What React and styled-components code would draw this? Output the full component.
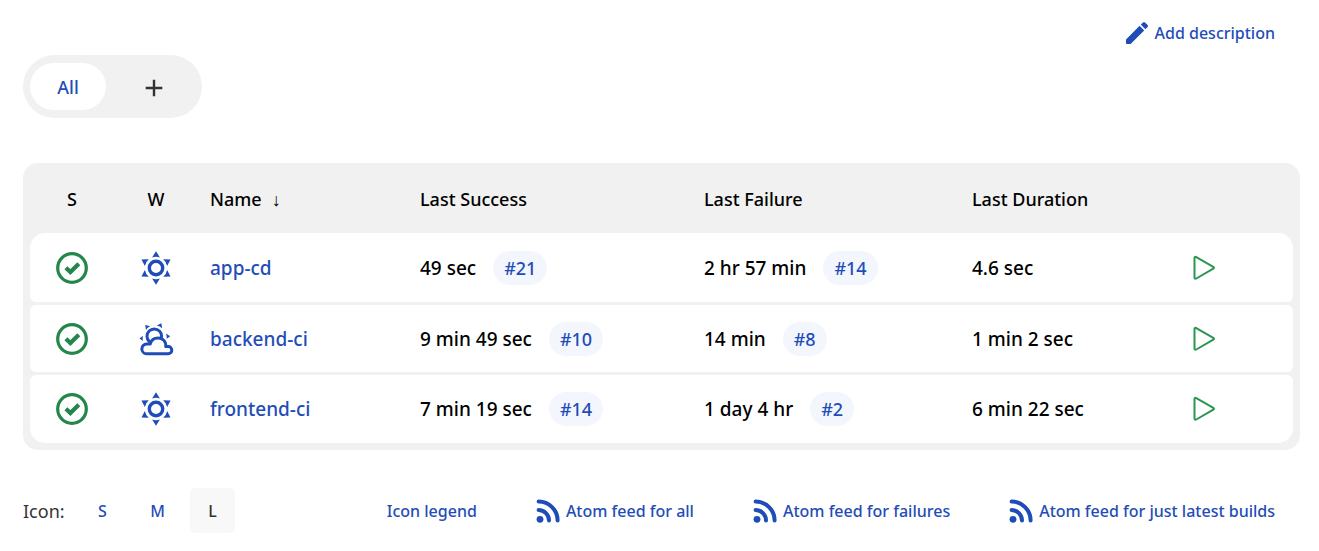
import React, { useState } from "react";
import styled, { createGlobalStyle } from "styled-components";

const blue = "#1f4db8";
const green = "#23864a";

const GlobalStyle = createGlobalStyle`
  *, *::before, *::after { box-sizing: border-box; }
  body {
    margin: 0;
    background: #fff;
    color: #000;
    font-family: "Segoe UI", "Noto Sans", "Open Sans", sans-serif;
    font-size: 18px;
    font-weight: 500;
  }
  button, input { font: inherit; }
`;

const Page = styled.main`
  padding: 10px 19px 16px 23px;
`;

const TopBar = styled.div`
  display: flex;
  justify-content: flex-end;
  height: 45px;
  padding-right: 25px;
`;

const TextLink = styled.a`
  display: inline-flex;
  align-items: center;
  gap: 6px;
  height: 45px;
  color: ${blue};
  font-size: 16px;
  text-decoration: none;
  white-space: nowrap;
`;

const Tabs = styled.nav`
  display: inline-flex;
  gap: 7px;
  padding: 8px 7px;
  border-radius: 32px;
  background: #f1f1f1;
`;

const Tab = styled.button`
  display: flex;
  align-items: center;
  justify-content: center;
  width: ${(p) => (p.$active ? 76 : 82)}px;
  height: 47px;
  padding: 0;
  border: 0;
  border-radius: 24px;
  background: ${(p) => (p.$active ? "#fff" : "transparent")};
  color: ${(p) => (p.$active ? blue : "#333")};
  cursor: pointer;
`;

const TablePanel = styled.section`
  margin-top: 45px;
  padding: 0 7px 4px;
  border-radius: 15px;
  background: #f1f1f1;
`;

const JobTable = styled.table`
  width: 100%;
  table-layout: fixed;
  border-collapse: separate;
  border-spacing: 0 3px;
`;

const HeadCell = styled.th`
  height: 64px;
  padding: 2px 12px 0;
  font-weight: 500;
  text-align: ${(p) => (p.$center ? "center" : "left")};
  white-space: nowrap;
`;

const SortArrow = styled.span`
  margin-left: 10px;
  font-family: "Liberation Sans", sans-serif;
  font-weight: 400;
`;

const Cell = styled.td`
  height: 67px;
  padding: 0 12px;
  background: #fff;
  font-size: 19px;
  text-align: ${(p) => (p.$center ? "center" : "left")};
  white-space: nowrap;
  svg { display: inline-block; vertical-align: middle; }
`;

const Row = styled.tr`
  & > td:first-child { border-radius: 6px 0 0 6px; }
  & > td:last-child { border-radius: 0 6px 6px 0; padding: 0; }
  &:first-child > td { height: 69px; }
  &:last-child > td { height: 68px; }
  &:first-child > td:first-child { border-top-left-radius: 15px; }
  &:first-child > td:last-child { border-top-right-radius: 15px; }
  &:last-child > td:first-child { border-bottom-left-radius: 15px; }
  &:last-child > td:last-child { border-bottom-right-radius: 15px; }
`;

const JobLink = styled.a`
  color: ${blue};
  text-decoration: none;
`;

const BuildLink = styled.a`
  display: inline-flex;
  align-items: center;
  height: 34px;
  margin-left: 17px;
  padding: 0 11px;
  border-radius: 17px;
  background: #f3f6fc;
  color: ${blue};
  font-size: 18px;
  text-decoration: none;
`;

const RunButton = styled.button`
  display: flex;
  align-items: center;
  justify-content: center;
  width: 56px;
  height: 45px;
  padding: 0;
  border: 0;
  background: transparent;
  cursor: pointer;
`;

const Footer = styled.footer`
  display: flex;
  align-items: center;
  justify-content: space-between;
  margin-top: 38px;
  padding-right: 25px;
`;

const Sizes = styled.div`
  display: flex;
  align-items: center;
  gap: 10px;
`;

const SizesLabel = styled.span`
  width: 47px;
  color: #333;
  font-weight: 400;
`;

const SizeButton = styled.button`
  width: 45px;
  height: 45px;
  padding: 0;
  border: 0;
  border-radius: 5px;
  background: ${(p) => (p.$active ? "#f8f8f8" : "transparent")};
  color: ${(p) => (p.$active ? "#333" : blue)};
  font-size: 16px;
  cursor: pointer;
`;

const FooterLinks = styled.div`
  display: flex;
  gap: 59px;
`;

const PencilIcon = () => (
  <svg width="24" height="24" viewBox="0 0 24 24" fill={blue} aria-hidden="true">
    <path d="M1 18.4 14.6 4.8l4.6 4.6L5.6 23H2q-1 0-1-1zM15.8 3.6 18 1.4q1-.9 2 0l2.6 2.6q.9 1 0 2l-2.2 2.2z" />
  </svg>
);

const PlusIcon = () => (
  <svg width="18" height="20" viewBox="0 0 18 20" stroke="#333" strokeWidth="2.4" aria-hidden="true">
    <path d="M9 2.700v16.600M.7 11h16.600" />
  </svg>
);

const SuccessIcon = () => (
  <svg width="32" height="32" viewBox="0 0 32 32" fill="none" stroke={green} role="img" aria-label="Success">
    <circle cx="16" cy="16" r="14.300" strokeWidth="3.200" />
    <path d="m9.900 15.700 4.500 4.300 8.400-8.200" strokeWidth="4.200" />
  </svg>
);

const SunnyIcon = () => (
  <svg width="34" height="34" viewBox="-17 -17 34 34" fill={blue} role="img" aria-label="Sunny">
    <circle r="6.700" fill="none" stroke={blue} strokeWidth="3.400" />
    {[0, 60, 120, 180, 240, 300].map((a) => (
      <path key={a} d="M0-16.800 3.900-10.600Q0-12-3.900-10.600z" transform={`rotate(${a})`} />
    ))}
  </svg>
);

const CloudyIcon = () => (
  <svg width="36" height="36" viewBox="0 0 36 36" fill={blue} role="img" aria-label="Partly cloudy">
    <circle cx="16.300" cy="15.200" r="7.300" fill="none" stroke={blue} strokeWidth="3" />
    <path d="M1.500 17.400 4.900 14.800Q4.300 17.300 4.900 19.900zM7.200 4.100l4.900 1.200Q9.300 6.400 8 9zM18.700 4.600l4.700-2.400.7 5.200Q22.300 5.100 18.700 4.600zM27.900 12.500l4.300 2.700-3.400 2.600Q29 15 27.900 12.500z" />
    <path d="M8.600 32.800h21.600a3.500 3.500 0 0 0 0-7.200h-2.500c.5-5-2.800-8.700-7.600-8.700-4.200 0-7 2.400-7.900 6.200H8.800a4.850 4.850 0 0 0-.2 9.700z" fill="#fff" stroke={blue} strokeWidth="3" strokeLinejoin="round" />
  </svg>
);

const PlayIcon = () => (
  <svg width="24" height="26" viewBox="0 0 24 26" fill="none" stroke="#2a9550" strokeWidth="2" strokeLinejoin="round" aria-hidden="true">
    <path d="M2.500 3v19.600c0 1.100.9 1.400 1.800.9l17-9.800c.9-.5.9-1.300 0-1.800L4.300 2.100C3.400 1.600 2.500 1.900 2.500 3z" />
  </svg>
);

const FeedIcon = () => (
  <svg width="24" height="24" viewBox="0 0 24 24" fill="none" stroke={blue} strokeWidth="4" strokeLinecap="round" aria-hidden="true">
    <circle cx="4" cy="20.300" r="3.400" fill={blue} stroke="none" />
    <path d="M2.600 2.500c10.500 0 19 8.500 19 19M2.600 11c5.800 0 10.400 4.800 10.400 10.500" />
  </svg>
);

const jobs = [
  { name: "app-cd", weather: "sunny", success: ["49 sec", "#21"], failure: ["2 hr 57 min", "#14"], duration: "4.6 sec" },
  { name: "backend-ci", weather: "cloudy", success: ["9 min 49 sec", "#10"], failure: ["14 min", "#8"], duration: "1 min 2 sec" },
  { name: "frontend-ci", weather: "sunny", success: ["7 min 19 sec", "#14"], failure: ["1 day 4 hr", "#2"], duration: "6 min 22 sec" },
];

const columns = [84, 84, 210, 284, 268, 216, 117];
const Column = styled.col`
  width: ${(p) => p.$width}px;
`;

const feeds = ["Atom feed for all", "Atom feed for failures", "Atom feed for just latest builds"];

export default function App() {
  const [size, setSize] = useState("L");
  return (
    <Page>
      <GlobalStyle />
      <TopBar>
        <TextLink href="#description"><PencilIcon />Add description</TextLink>
      </TopBar>
      <Tabs aria-label="Views">
        <Tab $active>All</Tab>
        <Tab aria-label="New view"><PlusIcon /></Tab>
      </Tabs>
      <TablePanel>
        <JobTable>
          <colgroup>{columns.map((w, i) => <Column key={i} $width={w} />)}</colgroup>
          <thead>
            <tr>
              <HeadCell $center>S</HeadCell>
              <HeadCell $center>W</HeadCell>
              <HeadCell>Name<SortArrow>↓</SortArrow></HeadCell>
              <HeadCell>Last Success</HeadCell>
              <HeadCell>Last Failure</HeadCell>
              <HeadCell>Last Duration</HeadCell>
              <HeadCell />
            </tr>
          </thead>
          <tbody>
            {jobs.map((job) => (
              <Row key={job.name}>
                <Cell $center><SuccessIcon /></Cell>
                <Cell $center>{job.weather === "sunny" ? <SunnyIcon /> : <CloudyIcon />}</Cell>
                <Cell><JobLink href={`#${job.name}`}>{job.name}</JobLink></Cell>
                <Cell>{job.success[0]}<BuildLink href="#build">{job.success[1]}</BuildLink></Cell>
                <Cell>{job.failure[0]}<BuildLink href="#build">{job.failure[1]}</BuildLink></Cell>
                <Cell>{job.duration}</Cell>
                <Cell><RunButton aria-label={`Build ${job.name}`}><PlayIcon /></RunButton></Cell>
              </Row>
            ))}
          </tbody>
        </JobTable>
      </TablePanel>
      <Footer>
        <Sizes>
          <SizesLabel>Icon:</SizesLabel>
          {["S", "M", "L"].map((s) => (
            <SizeButton key={s} $active={s === size} onClick={() => setSize(s)}>{s}</SizeButton>
          ))}
        </Sizes>
        <FooterLinks>
          <TextLink href="#legend">Icon legend</TextLink>
          {feeds.map((f) => <TextLink key={f} href="#feed"><FeedIcon />{f}</TextLink>)}
        </FooterLinks>
      </Footer>
    </Page>
  );
}
